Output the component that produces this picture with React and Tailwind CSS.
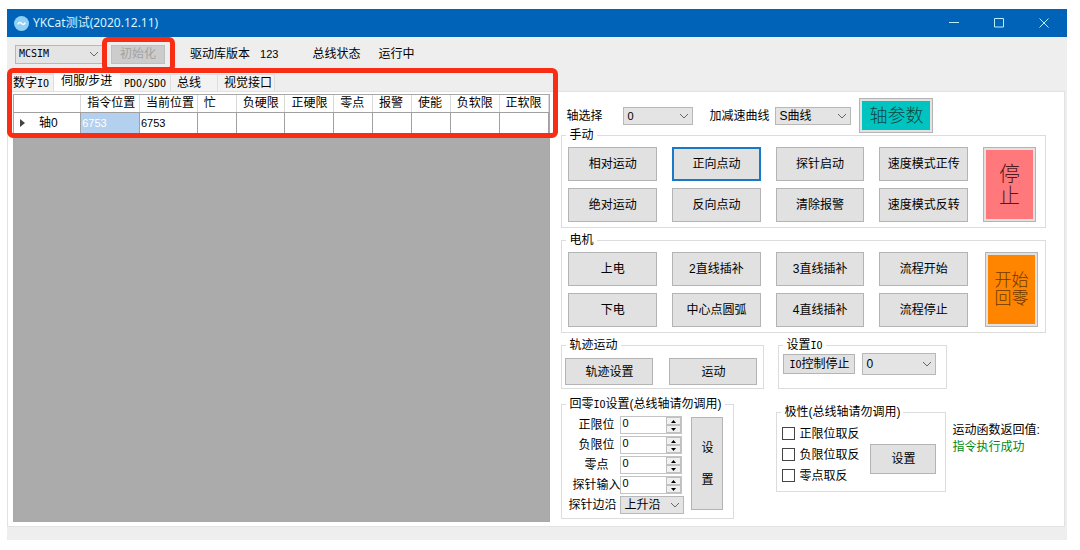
const manualButtons = [
  ['相对运动', '正向点动', '探针启动', '速度模式正传'],
  ['绝对运动', '反向点动', '清除报警', '速度模式反转'],
]

const motorButtons = [
  ['上电', '2直线插补', '3直线插补', '流程开始'],
  ['下电', '中心点圆弧', '4直线插补', '流程停止'],
]

const columns = [
  { label: '', width: 67 },
  { label: '指令位置', width: 59 },
  { label: '当前位置', width: 58 },
  { label: '忙', width: 39 },
  { label: '负硬限', width: 49 },
  { label: '正硬限', width: 49 },
  { label: '零点', width: 39 },
  { label: '报警', width: 39 },
  { label: '使能', width: 39 },
  { label: '负软限', width: 49 },
  { label: '正软限', width: 50 },
]

const homeInputs = ['正限位', '负限位', '零点', '探针输入']
const polarityOptions = ['正限位取反', '负限位取反', '零点取反']

function Mono({ children }) {
  return (
    <span className="font-['DejaVu_Sans_Mono',monospace] text-[10px]">{children}</span>
  )
}

function Button({ children, className = '', focused = false }) {
  return (
    <button
      className={`bg-[#e1e1e1] text-center ${
        focused ? 'border-2 border-[#1a78c8]' : 'border border-[#b4b4b4]'
      } ${className}`}
      type="button"
    >
      {children}
    </button>
  )
}

function Select({ className = '', id, label, options, textClass = '' }) {
  return (
    <div className={`relative ${className}`}>
      <select
        aria-label={label}
        className={`block h-full w-full appearance-none border border-[#b8b8b8] bg-[#e4e4e4] pl-[3px] pr-4 leading-4 outline-none ${textClass}`}
        id={id}
      >
        {options.map((option) => (
          <option key={option}>{option}</option>
        ))}
      </select>
      <svg
        className="pointer-events-none absolute inset-y-0 right-1 my-auto h-2 w-[10px]"
        fill="none"
        stroke="#666"
        viewBox="0 0 10 8"
      >
        <path d="M1 2l4 4 4-4" />
      </svg>
    </div>
  )
}

function Group({ children, className = '', title }) {
  return (
    <fieldset className={`min-w-0 border border-[#dcdcdc] ${className}`}>
      <legend className="ml-1 h-3 px-[3px] leading-3">{title}</legend>
      {children}
    </fieldset>
  )
}

function ButtonGrid({ focusedLabel, rows }) {
  return (
    <div className="grid flex-1 grid-cols-4 gap-x-[15px] gap-y-[7px]">
      {rows.flat().map((label) => (
        <Button className="h-[34px]" focused={label === focusedLabel} key={label}>
          {label}
        </Button>
      ))}
    </div>
  )
}

function Spinner({ id }) {
  return (
    <div className="flex h-[18px] w-[62px] border border-[#c4c4c4] bg-white">
      <input
        className="w-0 flex-1 appearance-none pb-1 pl-px text-[11px] leading-3 outline-none [&::-webkit-inner-spin-button]:appearance-none"
        defaultValue="0"
        id={id}
        type="number"
      />
      <div className="flex w-[15px] flex-col">
        <button
          aria-label="增加"
          className="flex flex-1 items-center justify-center border border-[#c0c0c0] bg-[#f0f0f0]"
          type="button"
        >
          <svg className="h-[3px] w-[5px]" viewBox="0 0 5 3">
            <path d="M0 3L2.5 0 5 3z" />
          </svg>
        </button>
        <button
          aria-label="减少"
          className="flex flex-1 items-center justify-center border border-[#c0c0c0] bg-[#f0f0f0]"
          type="button"
        >
          <svg className="h-[3px] w-[5px]" viewBox="0 0 5 3">
            <path d="M0 0L2.5 3 5 0z" />
          </svg>
        </button>
      </div>
    </div>
  )
}

function TitleBar() {
  return (
    <header className="flex h-7 items-center bg-[#0063b8] pl-[7px] text-[#d9f3ff]">
      <svg className="h-[15px] w-[15px]" viewBox="0 0 16 16">
        <circle cx="8" cy="8" fill="#8fd0f7" r="8" />
        <path d="M4 9c1.500-3 3-2 4-1s2.500 2 4-1" fill="none" stroke="#fff" strokeWidth="1.500" />
      </svg>
      <h1 className="ml-[4px] flex-1 font-['Noto_Sans','Noto_Sans_CJK_SC',sans-serif] text-[12px] leading-4">
        YKCat测试(2020.12.11)
      </h1>
      <div className="flex gap-[35px] pr-[18px]">
        <button aria-label="最小化" type="button">
          <svg className="h-[10px] w-[10px]" fill="none" stroke="#b5f1ff" viewBox="0 0 10 10">
            <path d="M0 4.500h10" />
          </svg>
        </button>
        <button aria-label="最大化" type="button">
          <svg className="h-[10px] w-[10px]" fill="none" stroke="#b5f1ff" viewBox="0 0 10 10">
            <path d="M.5.5h9v8.500h-9z" />
          </svg>
        </button>
        <button aria-label="关闭" type="button">
          <svg className="h-[10px] w-[10px]" fill="none" stroke="#b5f1ff" viewBox="0 0 10 10">
            <path d="M.5.5l9 9M9.500.5l-9 9" />
          </svg>
        </button>
      </div>
    </header>
  )
}

function Toolbar() {
  return (
    <div className="flex h-[34px] items-center pl-2">
      <Select
        className="h-[19px] w-[88px]"
        label="控制器"
        options={['MCSIM']}
        textClass="font-['DejaVu_Sans_Mono',monospace] text-[10px]"
      />
      <div className="relative ml-2">
        <button
          className="block h-[19px] w-[54px] border border-[#bfbfbf] bg-[#cccccc] text-[#a3a3a3]"
          disabled
          type="button"
        >
          初始化
        </button>
        <div className="pointer-events-none absolute -inset-y-2 -right-[10px] -left-[9px] z-10 rounded-md border-5 border-[#f92d13]" />
      </div>
      <span className="ml-[25px]">驱动库版本</span>
      <span className="ml-[10px] text-[11px]">123</span>
      <span className="ml-[34px]">总线状态</span>
      <span className="ml-[18px]">运行中</span>
    </div>
  )
}

function Tabs() {
  const tab = 'h-[17px] border-t border-r border-[#dedede] bg-[#f2f2f2] text-left'
  return (
    <div className="flex h-5 items-end pl-[5px]" role="tablist">
      <button className={`${tab} w-[42px] pl-px`} role="tab" type="button">
        数字<Mono>IO</Mono>
      </button>
      <button
        aria-selected="true"
        className="h-5 w-[66px] bg-white pl-[7px] text-left"
        role="tab"
        type="button"
      >
        伺服/步进
      </button>
      <button className={`${tab} w-[51px] pl-1`} role="tab" type="button">
        <Mono>PDO/SDO</Mono>
      </button>
      <button className={`${tab} w-[47px] pl-[6px]`} role="tab" type="button">
        总线
      </button>
      <button className={`${tab} w-[57px] pl-[6px]`} role="tab" type="button">
        视觉接口
      </button>
    </div>
  )
}

function AxisTable() {
  return (
    <div className="relative border border-[#a8a8a8] bg-[#ababab]">
      <table className="w-full table-fixed border-collapse bg-white">
        <colgroup>
          {columns.map((column, index) => (
            <col key={index} style={{ width: `${(column.width / 537) * 100}%` }} />
          ))}
        </colgroup>
        <thead>
          <tr className="h-[17px]">
            {columns.map((column, index) => (
              <th
                className="overflow-hidden border-r border-b border-r-[#d8d8d8] border-b-[#a0a0a0] p-0 pl-[6px] text-left font-normal leading-4 whitespace-nowrap"
                key={index}
              >
                {column.label}
              </th>
            ))}
          </tr>
        </thead>
        <tbody>
          <tr className="h-[21px]">
            <th className="border-r border-b border-[#a0a0a0] p-0 text-left font-normal">
              <div className="flex items-center pl-[6px]">
                <svg className="h-2 w-[5px]" fill="#444" viewBox="0 0 5 8">
                  <path d="M0 0l5 4-5 4z" />
                </svg>
                <span className="ml-[14px] leading-4">轴0</span>
              </div>
            </th>
            <td className="border-r border-b border-[#a0a0a0] bg-[#b3d0ee] p-0 pl-px text-[11px] text-white">
              6753
            </td>
            <td className="border-r border-b border-[#a0a0a0] p-0 pl-px text-[11px]">6753</td>
            {columns.slice(3).map((column) => (
              <td className="border-r border-b border-[#a0a0a0] p-0" key={column.label} />
            ))}
          </tr>
        </tbody>
      </table>
      <div className="pointer-events-none absolute -top-[27px] -right-[9px] -left-[7px] z-10 h-[70px] rounded-md border-5 border-[#f92d13]" />
    </div>
  )
}

function AxisRow() {
  return (
    <div className="flex h-[35px] items-center pl-[5px]">
      <label className="w-[57px]" htmlFor="axis">
        轴选择
      </label>
      <Select className="h-[18px] w-[70px]" id="axis" options={['0']} textClass="text-[11px]" />
      <label className="ml-4 w-[66px]" htmlFor="curve">
        加减速曲线
      </label>
      <Select className="h-[18px] w-[76px]" id="curve" options={['S曲线']} />
      <button
        className="ml-2 h-[35px] w-[74px] border border-[#b4b4b4] bg-[#00c4c0] text-[18px] font-light text-[#124644] shadow-[inset_0_0_0_2px_#e1e1e1]"
        type="button"
      >
        轴参数
      </button>
    </div>
  )
}

function HomeGroup() {
  return (
    <Group
      className="w-[173px]"
      title={
        <>
          回零<Mono>IO</Mono>设置(总线轴请勿调用)
        </>
      }
    >
      <div className="flex gap-[7px] pt-[5px] pr-[10px] pb-[3px] pl-[3px]">
        <div className="flex-1">
          {homeInputs.map((label, index) => (
            <div className="flex h-5 items-center" key={label}>
              <label
                className="w-[55px] pl-[7px] text-center leading-4 whitespace-nowrap"
                htmlFor={`home-${index}`}
              >
                {label}
              </label>
              <Spinner id={`home-${index}`} />
            </div>
          ))}
          <div className="flex h-5 items-center">
            <label className="w-[55px] pl-[3px] leading-4" htmlFor="edge">
              探针边沿
            </label>
            <Select className="h-[18px] w-[64px]" id="edge" options={['上升沿']} />
          </div>
        </div>
        <Button className="mt-[2px] mb-[5px] w-8 leading-8">
          设
          <br />置
        </Button>
      </div>
    </Group>
  )
}

function PolarityGroup() {
  return (
    <Group className="mt-2 w-[170px]" title="极性(总线轴请勿调用)">
      <div className="flex items-center pt-[5px] pr-[9px] pb-[5px] pl-[5px]">
        <div className="flex-1">
          {polarityOptions.map((label) => (
            <label className="flex h-[21px] items-center gap-1" key={label}>
              <input
                className="h-[13px] w-[13px] appearance-none border border-[#444] bg-white checked:bg-[#0063b8]"
                type="checkbox"
              />
              {label}
            </label>
          ))}
        </div>
        <Button className="mt-2 h-[30px] w-[66px]">设置</Button>
      </div>
    </Group>
  )
}

function ControlPanel() {
  return (
    <div className="pt-1 pr-[18px] pb-[3px] pl-[11px]">
      <AxisRow />

      <Group className="-mt-1" title="手动">
        <div className="flex gap-[15px] pt-[6px] pr-[9px] pb-[5px] pl-[6px]">
          <ButtonGrid focusedLabel="正向点动" rows={manualButtons} />
          <button
            className="w-[53px] border border-[#b4b4b4] bg-[#ff787c] text-[21px] leading-[22px] font-light text-[#521c1e] shadow-[inset_0_0_0_2px_#e1e1e1]"
            type="button"
          >
            停
            <br />止
          </button>
        </div>
      </Group>

      <Group className="mt-[6px]" title="电机">
        <div className="flex gap-[17px] pt-[6px] pr-[7px] pb-[5px] pl-[6px]">
          <ButtonGrid rows={motorButtons} />
          <button
            className="w-[53px] border border-[#b4b4b4] bg-[#ff8400] text-[17px] leading-[18px] font-light text-[#6b3800] shadow-[inset_0_0_0_2px_#e1e1e1]"
            type="button"
          >
            开始
            <br />
            回零
          </button>
        </div>
      </Group>

      <div className="mt-[6px] flex gap-[14px]">
        <Group className="w-[203px]" title="轨迹运动">
          <div className="flex gap-4 pt-[7px] pr-[6px] pb-[3px] pl-[3px]">
            <Button className="h-[27px] flex-1">轨迹设置</Button>
            <Button className="h-[27px] flex-1">运动</Button>
          </div>
        </Group>
        <Group
          className="w-[169px]"
          title={
            <>
              设置<Mono>IO</Mono>
            </>
          }
        >
          <div className="flex items-center gap-[7px] pt-[2px] pr-[10px] pl-1">
            <Button className="h-5 w-[72px]">
              <Mono>IO</Mono>控制停止
            </Button>
            <Select className="h-[22px] flex-1" label="IO编号" options={['0']} />
          </div>
        </Group>
      </div>

      <div className="mt-[9px] flex items-start">
        <HomeGroup />
        <div className="ml-[42px]">
          <PolarityGroup />
        </div>
        <div className="mt-6 ml-[6px] leading-[17px] whitespace-nowrap">
          <p>运动函数返回值:</p>
          <p className="text-[#008a16]">指令执行成功</p>
        </div>
      </div>
    </div>
  )
}

function App() {
  return (
    <div className="bg-white pt-[9px] pr-[13px] pl-[7px] font-['Liberation_Sans','Noto_Sans_CJK_SC',sans-serif] text-[12px] leading-4 text-black">
      <div className="bg-[#eeeeee] pb-[13px]">
        <TitleBar />
        <Toolbar />
        <Tabs />
        <main className="mr-[2px] grid grid-cols-[538fr_514fr] border border-[#e2e2e2] bg-white pt-[2px] pb-1 pl-[5px]">
          <AxisTable />
          <ControlPanel />
        </main>
      </div>
    </div>
  )
}

export default App
